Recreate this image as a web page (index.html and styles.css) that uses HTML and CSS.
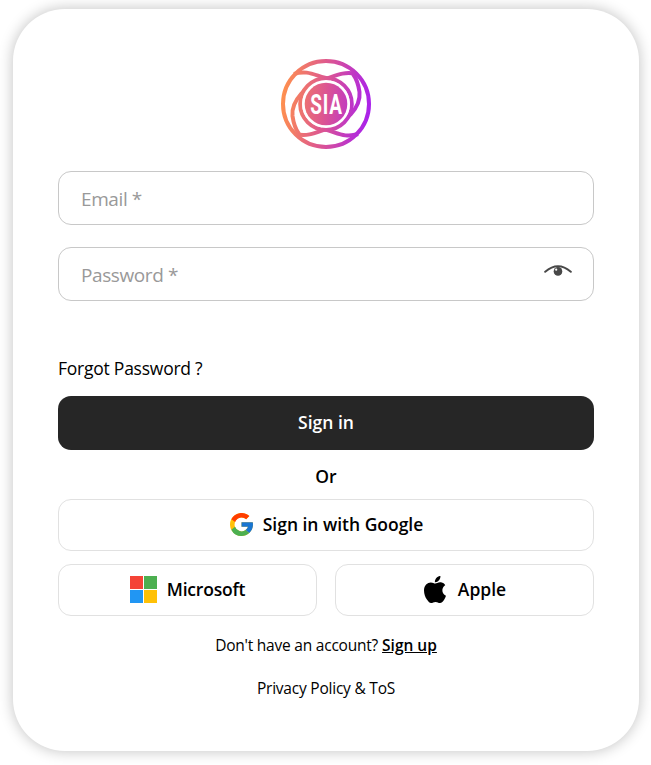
FILE: index.html
```html
<!DOCTYPE html>
<html lang="en">
<head>
<meta charset="utf-8">
<title>Sign in</title>
<link rel="stylesheet" href="styles.css">
</head>
<body>
<main class="card">
  <svg class="logo" viewBox="0 0 90 90" role="img" aria-label="SIA">
    <defs>
      <linearGradient id="brand" gradientUnits="userSpaceOnUse" x1="0" y1="40" x2="90" y2="50">
        <stop offset="0" stop-color="#ff914d"/>
        <stop offset=".5" stop-color="#db5494"/>
        <stop offset="1" stop-color="#a820ed"/>
      </linearGradient>
    </defs>
    <g fill="none" stroke="url(#brand)" stroke-width="4">
      <circle cx="45" cy="45" r="43" stroke-width="4"/>
      <path d="M13 15C27 10 36 18 49 20"/>
      <path d="M76 15C62 12 54 17 45 20C25 25 10 42 11.500 57Q13 68 18 75"/>
      <path d="M77 75C63 80 54 72 41 70"/>
      <path d="M14 75C28 78 36 73 45 70C65 65 80 48 78.500 33Q77 22 72 15"/>
      <circle cx="45" cy="45" r="25.8" stroke-width="4"/>
    </g>
    <circle cx="45" cy="45" r="24" fill="#fff"/>
    <circle cx="45" cy="45" r="21.3" fill="url(#brand)"/>
    <text class="logo-text" transform="translate(29.3 55) scale(.7 1)">SIA</text>
  </svg>
  <form class="form">
    <div class="field"><span class="t-email">Email *</span></div>
    <div class="field"><span class="t-password">Password *</span>
      <svg class="eye" viewBox="0 0 28 14"><path d="M1.200 6.800Q14-4.200 26.800 6.800" fill="none" stroke="#484848" stroke-width="2" stroke-linecap="round"/><circle cx="14" cy="6.400" r="4.300" fill="#484848"/><circle cx="12.200" cy="4.700" r="1.100" fill="#fff"/></svg>
    </div>
    <a class="forgot">Forgot Password ?</a>
    <button class="primary" type="button">Sign in</button>
    <div class="or">Or</div>
    <button class="provider" type="button">
      <svg class="google" viewBox="4 4 40 40"><path fill="#ffc107" d="M43.6 20H24v8h11.3A12 12 0 1 1 32 15l5.7-5.6A20 20 0 1 0 43.6 20z"/><path fill="#ff3d00" d="M6.3 14.7l6.6 4.8A12 12 0 0 1 32 15l5.7-5.6A20 20 0 0 0 6.3 14.7z"/><path fill="#4caf50" d="M24 44c5.2 0 9.9-2 13.4-5.2l-6.2-5.2A12 12 0 0 1 12.7 28l-6.5 5A20 20 0 0 0 24 44z"/><path fill="#1976d2" d="M43.6 20H24v8h11.3a12 12 0 0 1-4.1 5.6l6.2 5.2C37 39.2 44 34 44 24c0-1.3-.1-2.7-.4-4z"/></svg>
      <span class="t-google">Sign in with Google</span>
    </button>
    <div class="providers">
      <button class="provider" type="button">
        <svg class="microsoft" viewBox="0 0 27 27"><path fill="#f44336" d="M0 0h13v13H0z"/><path fill="#4caf50" d="M14 0h13v13H14z"/><path fill="#2196f3" d="M0 14h13v13H0z"/><path fill="#ffc107" d="M14 14h13v13H14z"/></svg>
        <span class="t-microsoft">Microsoft</span>
      </button>
      <button class="provider provider-apple" type="button">
        <svg class="apple" viewBox="0 0 814 1000" preserveAspectRatio="none"><path d="M788 341c-6 4-108 62-108 190 0 148 130 201 134 202-1 3-21 72-69 142-42 62-87 124-155 124s-85-40-163-40c-76 0-103 41-165 41S157 943 107 872C48 789 0 660 0 538c0-196 127-300 253-300 67 0 122 44 164 44 40 0 102-47 179-47 29 0 133 3 192 106zM554 159c32-37 54-89 54-141 0-7-1-14-2-20-51 2-112 34-149 77-28 33-55 85-55 137 0 8 1 16 2 18 3 1 8 1 14 1 46 0 104-31 136-72z"/></svg>
        <span class="t-apple">Apple</span>
      </button>
    </div>
  </form>
  <p class="signup"><span class="t-account">Don't have an account?</span><a class="t-signup">Sign up</a></p>
  <p class="legal"><span>Privacy Policy &amp; ToS</span></p>
</main>
</body>
</html>
```

FILE: styles.css
```css
* { box-sizing: border-box; }
body { margin: 0; padding: 9px 0 0 13px; height: 765px; overflow: hidden; background: #fff; color: #000; font-family: "Open Sans", "Noto Sans", sans-serif; }
.card { width: 626px; height: 742px; padding: 50px 45px 0; border-radius: 52px; background: #fff; box-shadow: 0 0 14px 1px rgba(0, 0, 0, .22); display: flex; flex-direction: column; align-items: center; }
.logo { width: 90px; height: 90px; flex: none; }
.logo-text { font: 700 27px "Roboto", sans-serif; letter-spacing: 1.2px; fill: #fff; }
.form { width: 536px; margin-top: 22px; display: flex; flex-direction: column; }
.field { height: 54px; margin-bottom: 22px; padding: 2px 21px 0 22px; border: 1px solid #c8c8c8; border-radius: 13px; display: flex; align-items: center; justify-content: space-between; color: #999; font-size: 19px; letter-spacing: -.4px; }
.eye { width: 28px; height: 14px; margin-bottom: 7px; }
.forgot { margin-top: 33px; height: 24px; line-height: 24px; font-size: 17.5px; letter-spacing: -.24px; align-self: flex-start; }
button { font: 600 17.5px "Open Sans", "Noto Sans", sans-serif; color: #000; padding: 0; white-space: nowrap; }
.primary { margin-top: 16px; height: 54px; padding-bottom: 2px; border: 0; border-radius: 13px; background: #262626; color: #fff; }
.or { height: 49px; line-height: 52px; text-align: center; font-weight: 600; font-size: 17.5px; }
.provider { width: 100%; height: 52px; padding: 0 0 2px; background: #fff; border: 1px solid #e1e1e1; border-radius: 13px; display: flex; align-items: center; justify-content: center; gap: 10px; }
.google { width: 23px; height: 23px; margin-left: 1px; }
.microsoft { width: 27px; height: 27px; }
.t-google { letter-spacing: -.02px; }
.t-microsoft { letter-spacing: -.2px; }
.provider-apple { gap: 12px; padding-left: 1px; }
.apple { width: 22px; height: 27px; }
.providers { display: grid; grid-template-columns: 259px 259px; gap: 18px; margin-top: 13px; }
.signup, .legal { margin: 0; font-size: 15.5px; line-height: 22px; letter-spacing: -.22px; white-space: nowrap; }
.signup { margin-top: 18px; display: flex; gap: 4px; }
.signup a { font-weight: 600; letter-spacing: 0; text-decoration: underline; }
.legal { margin-top: 21px; }
```
